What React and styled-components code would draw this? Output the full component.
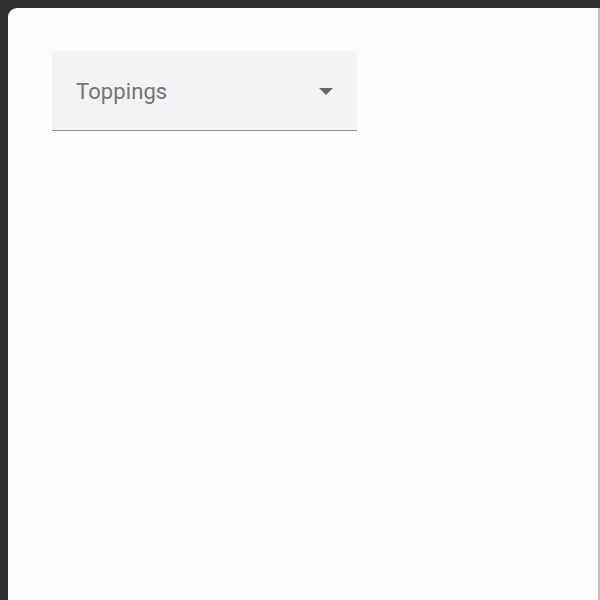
import styled, { createGlobalStyle } from "styled-components";

const GlobalStyle = createGlobalStyle`
  html, body {
    margin: 0;
    padding: 0;
    height: 100%;
    background: #2f2f2f;
  }
  #root {
    height: 100%;
  }
`;

const Page = styled.div`
  box-sizing: border-box;
  height: 100%;
  padding: 8px 0 0 8px;
  display: flex;
`;

const Card = styled.main`
  flex: 1;
  box-sizing: border-box;
  background: #fdfbfe;
  border-top-left-radius: 9px;
  border-right: 2px solid #bdbdbd;
  padding: 43px 44px;
`;

const Field = styled.div`
  box-sizing: border-box;
  width: 305px;
  height: 80px;
  background: #f3f2f4;
  border-radius: 5px 5px 0 0;
  border-bottom: 1.5px solid #8f8f8f;
  display: flex;
  align-items: center;
  justify-content: space-between;
  padding: 1px 24px 0 24px;
  cursor: pointer;
`;

const Label = styled.span`
  font-family: Roboto, "Liberation Sans", sans-serif;
  font-size: 22px;
  color: #757575;
  letter-spacing: 0.1px;
`;

const Arrow = styled.span`
  width: 0;
  height: 0;
  border-left: 7px solid transparent;
  border-right: 7px solid transparent;
  border-top: 7px solid #666;
`;

export default function App() {
  return (
    <>
      <GlobalStyle />
      <Page>
        <Card>
          <Field>
            <Label>Toppings</Label>
            <Arrow />
          </Field>
        </Card>
      </Page>
    </>
  );
}
